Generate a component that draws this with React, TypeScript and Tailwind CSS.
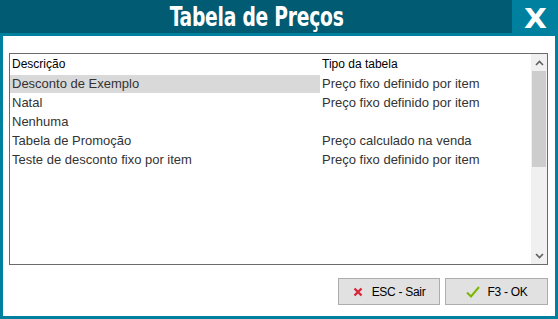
import React from "react";

const rows = [
  { desc: "Desconto de Exemplo", tipo: "Preço fixo definido por item" },
  { desc: "Natal", tipo: "Preço fixo definido por item" },
  { desc: "Nenhuma", tipo: "" },
  { desc: "Tabela de Promoção", tipo: "Preço calculado na venda" },
  { desc: "Teste de desconto fixo por item", tipo: "Preço fixo definido por item" },
];

function ScrollBar() {
  return (
    <div className="flex w-[16px] flex-col bg-[#f0f0f0]">
      <div className="flex h-[17px] items-center justify-center">
        <svg width="9" height="6" viewBox="0 0 9 6">
          <path d="M1 5 L4.5 1.5 L8 5" fill="none" stroke="#606060" strokeWidth="1.6" />
        </svg>
      </div>
      <div className="mx-[1px] h-[96px] bg-[#cdcdcd]" />
      <div className="flex-1" />
      <div className="flex h-[17px] items-center justify-center">
        <svg width="9" height="6" viewBox="0 0 9 6">
          <path d="M1 1 L4.5 4.5 L8 1" fill="none" stroke="#606060" strokeWidth="1.6" />
        </svg>
      </div>
    </div>
  );
}

export default function App() {
  return (
    <div
      className="flex h-[319px] w-[558px] flex-col bg-white"
      style={{ fontFamily: '"Liberation Sans", Arial, sans-serif' }}
    >
      <div className="flex h-[36px] border-b-[3px] border-[#00809f] bg-[#005b73]">
        <div className="flex flex-1 items-center justify-center pl-[2px]">
          <span
            className="inline-block scale-x-[0.8] text-[26px] font-bold leading-none tracking-[-0.3px] text-white"
            style={{ fontFamily: '"DejaVu Sans Condensed", "DejaVu Sans", sans-serif' }}
          >
            Tabela de Preços
          </span>
        </div>
        <div className="-mb-[3px] flex w-[46px] items-center justify-center bg-[#00809f]">
          <span
            className="inline-block scale-x-[1.1] text-[27px] font-bold leading-none text-white"
            style={{ fontFamily: '"DejaVu Sans", sans-serif' }}
          >
            X
          </span>
        </div>
      </div>
      <div className="flex flex-1 flex-col border-x-[3px] border-b-[3px] border-[#00809f] pl-[6px] pr-[7px] pt-[17px]">
        <div className="flex h-[212px] border border-[#6b6b6b]">
          <div className="flex flex-1 flex-col">
            <div className="flex h-[20px] items-center text-[12px] text-black">
              <span className="w-[310px] pl-[2px]">Descrição</span>
              <span className="pl-[2px]">Tipo da tabela</span>
            </div>
            {rows.map((r, i) => (
              <div key={r.desc} className="flex h-[19px] items-center text-[13px] text-[#333]">
                <span className={"flex h-[18px] w-[310px] items-center pl-[2px] " + (i === 0 ? "bg-[#d9d9d9]" : "")}>
                  {r.desc}
                </span>
                <span className="pl-[2px]">{r.tipo}</span>
              </div>
            ))}
          </div>
          <ScrollBar />
        </div>
        <div className="flex flex-1 items-center justify-end gap-[5px] pt-[2px]">
          <button className="flex h-[27px] w-[102px] items-center justify-center gap-[9px] border border-[#adadad] bg-[#e1e1e1] text-[12px] tracking-[-0.3px] text-black">
            <svg width="10" height="10" viewBox="0 0 10 10">
              <path d="M1.5 1.5 L8.5 8.5 M8.5 1.5 L1.5 8.5" stroke="#d9263a" strokeWidth="2.4" />
            </svg>
            ESC - Sair
          </button>
          <button className="flex h-[27px] w-[103px] items-center justify-center gap-[8px] border border-[#adadad] bg-[#e1e1e1] text-[12px] tracking-[-0.3px] text-black">
            <svg width="14" height="12" viewBox="0 0 14 12">
              <path d="M1 6.5 L5 10.5 L13 1" fill="none" stroke="#7ab800" strokeWidth="2" />
            </svg>
            F3 - OK
          </button>
        </div>
      </div>
    </div>
  );
}
